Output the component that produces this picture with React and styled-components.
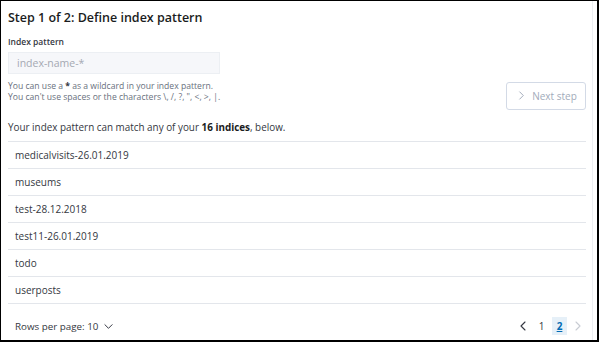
import React from "react";
import styled, { createGlobalStyle } from "styled-components";

const Global = createGlobalStyle`
  html, body { margin: 0; padding: 0; background: #fff; }
  body { font-family: "Open Sans", "Liberation Sans", sans-serif; color: #343741; }
`;

const Frame = styled.div`
  box-sizing: border-box;
  width: 599px;
  height: 342px;
  border: 1px solid #000;
  border-right-width: 2px;
  border-bottom-width: 2px;
  background: #fff;
  overflow: hidden;
`;

const Panel = styled.div`
  box-sizing: border-box;
  height: 100%;
  margin-right: 4px;
  border-right: 1px solid #eceef2;
  padding: 8px 6px 0 7px;
  display: flex;
  flex-direction: column;
`;

const Title = styled.h2`
  margin: 0;
  font-size: 12.5px;
  line-height: 18px;
  font-weight: 600;
  color: #1a1c21;
`;

const Label = styled.label`
  margin-top: 9px;
  font-size: 8.5px;
  line-height: 12px;
  font-weight: 600;
  color: #343741;
`;

const Input = styled.input`
  box-sizing: border-box;
  margin-top: 4px;
  width: 212px;
  height: 28px;
  border: 1px solid #eceff3;
  background: #f6f7fa;
  padding: 0 8px;
  font-family: inherit;
  font-size: 10.5px;
  color: #343741;
  outline: none;
  &::placeholder { color: #a5a9b2; }
`;

const HelpRow = styled.div`
  display: flex;
  justify-content: space-between;
  align-items: flex-start;
  margin-top: 6px;
`;

const Help = styled.div`
  font-size: 8.6px;
  line-height: 11px;
  color: #69707d;
  padding-top: 1px;
  b { font-weight: 700; color: #343741; }
`;

const NextButton = styled.button`
  box-sizing: border-box;
  width: 80px;
  height: 28px;
  margin-top: 2px;
  border: 1px solid #d3dae6;
  border-radius: 3px;
  background: #fff;
  display: flex;
  align-items: center;
  justify-content: center;
  gap: 6px;
  font-family: inherit;
  font-size: 10px;
  color: #a2abba;
  padding: 0 0 0 2px;
`;

const Summary = styled.p`
  margin: 9px 0 0;
  font-size: 9.9px;
  line-height: 16px;
  color: #343741;
  b { font-weight: 700; color: #1a1c21; }
`;

const Table = styled.div`
  margin-top: 6px;
  border-top: 1px solid #e3e6eb;
`;

const Row = styled.div`
  height: 26px;
  border-bottom: 1px solid #e3e6eb;
  display: flex;
  align-items: center;
  padding-left: 7px;
  font-size: 10px;
  color: #343741;
`;

const Footer = styled.div`
  display: flex;
  justify-content: space-between;
  align-items: center;
  height: 36px;
  padding-top: 9px;
  padding-left: 7px;
`;

const RowsPer = styled.div`
  display: flex;
  align-items: center;
  gap: 6px;
  font-size: 9.8px;
  color: #343741;
`;

const Pager = styled.div`
  display: flex;
  align-items: center;
  gap: 3px;
`;

const PageArrow = styled.span`
  display: flex;
  align-items: center;
  justify-content: center;
  width: 16px;
  height: 18px;
  color: ${(p) => (p.$disabled ? "#c8ccd3" : "#343741")};
`;

const PageNum = styled.span`
  display: flex;
  align-items: center;
  justify-content: center;
  width: 15px;
  height: 18px;
  font-size: 10px;
  font-weight: ${(p) => (p.$active ? 700 : 400)};
  color: ${(p) => (p.$active ? "#006bb4" : "#343741")};
  background: ${(p) => (p.$active ? "#e6f0f8" : "transparent")};
  text-decoration: ${(p) => (p.$active ? "underline" : "none")};
`;

const Chevron = ({ dir = "right", size = 8, color = "currentColor" }) => {
  const paths = {
    right: "M3 1 L7 5 L3 9",
    left: "M7 1 L3 5 L7 9",
    down: "M1 3 L5 7 L9 3",
  };
  return (
    <svg width={size} height={size} viewBox="0 0 10 10" fill="none">
      <path d={paths[dir]} stroke={color} strokeWidth="1.1" strokeLinecap="round" strokeLinejoin="round" />
    </svg>
  );
};

const indices = [
  "medicalvisits-26.01.2019",
  "museums",
  "test-28.12.2018",
  "test11-26.01.2019",
  "todo",
  "userposts",
];

export default function App() {
  return (
    <>
      <Global />
      <Frame>
        <Panel>
          <Title>Step 1 of 2: Define index pattern</Title>
          <Label>Index pattern</Label>
          <Input placeholder="index-name-*" />
          <HelpRow>
            <Help>
              You can use a <b>*</b> as a wildcard in your index pattern.
              <br />
              You can't use spaces or the characters \, /, ?, ", &lt;, &gt;, |.
            </Help>
            <NextButton disabled>
              <Chevron dir="right" size={9} />
              Next step
            </NextButton>
          </HelpRow>
          <Summary>
            Your index pattern can match any of your <b>16 indices</b>, below.
          </Summary>
          <Table>
            {indices.map((name) => (
              <Row key={name}>{name}</Row>
            ))}
          </Table>
          <Footer>
            <RowsPer>
              Rows per page: 10
              <Chevron dir="down" size={9} />
            </RowsPer>
            <Pager>
              <PageArrow><Chevron dir="left" size={10} /></PageArrow>
              <PageNum>1</PageNum>
              <PageNum $active>2</PageNum>
              <PageArrow $disabled><Chevron dir="right" size={10} /></PageArrow>
            </Pager>
          </Footer>
        </Panel>
      </Frame>
    </>
  );
}
